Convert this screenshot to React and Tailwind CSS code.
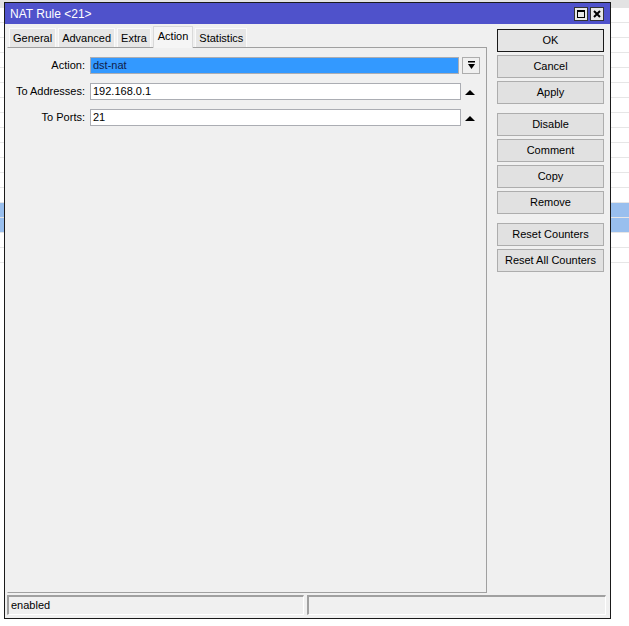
import React from 'react';

const font = { fontFamily: '"Liberation Sans", Arial, sans-serif' };

const tabs = ['General', 'Advanced', 'Extra', 'Action', 'Statistics'];

const buttonGroups = [
  ['OK', 'Cancel', 'Apply'],
  ['Disable', 'Comment', 'Copy', 'Remove'],
  ['Reset Counters', 'Reset All Counters'],
];

// background table rows peeking out behind the dialog
const rows = Array.from({ length: 17 }, (_, i) => i);

const UpArrow = () => (
  <svg width="10" height="6" viewBox="0 0 10 6" className="shrink-0">
    <path d="M0 6 L5 1 L10 6 Z" fill="#000" />
  </svg>
);

const Field = ({ label, value, selected, dropdown }) => (
  <div className="flex items-center h-[17px]">
    <div className="w-[79px] text-right pr-[5px] text-[11px] text-black">{label}</div>
    <div
      className={`h-[17px] border border-[#abadb3] flex items-center px-[2px] text-[11px] ${
        selected ? 'bg-[#3399ff] text-[#10204a] w-[369px]' : 'bg-white text-black w-[371px]'
      }`}
    >
      {value}
    </div>
    {dropdown ? (
      <div className="ml-[3px] w-[18px] h-[17px] border border-[#adadad] bg-[#f0f0f0] flex items-center justify-center">
        <svg width="9" height="9" viewBox="0 0 9 9">
          <rect x="1" y="0" width="7" height="1.5" fill="#000" />
          <path d="M1 3 L8 3 L4.5 8 Z" fill="#000" />
        </svg>
      </div>
    ) : (
      <div className="ml-[4px] w-[10px] flex items-center justify-center">
        <UpArrow />
      </div>
    )}
  </div>
);

const Btn = ({ label, primary }) => (
  <div
    className={`h-[23px] flex items-center justify-center text-[11px] text-black bg-[#e1e1e1] ${
      primary ? 'border border-[#1a1a1a] bg-[#e5e5e5]' : 'border border-[#adadad]'
    }`}
  >
    {label}
  </div>
);

export default function App() {
  return (
    <div className="relative w-[629px] h-[626px] bg-white overflow-hidden" style={font}>
      {/* background list */}
      <div className="flex flex-col">
        <div className="h-[8px] bg-[#e3e3e3]" />
        {rows.map((i) => (
          <div
            key={i}
            className={`h-[15px] border-b border-[#e6e6e6] ${i === 13 || i === 14 ? 'bg-[#99bfee]' : 'bg-white'}`}
          />
        ))}
      </div>

      {/* dialog window */}
      <div className="absolute left-[4px] top-[2px] w-[607px] h-[617px] border border-[#1a1a1a] bg-[#f0f0f0] flex flex-col">
        <div className="h-[21px] bg-[#4f52cb] flex items-center justify-between pl-[5px] pr-[6px]">
          <span className="text-[12px] text-white">NAT Rule &lt;21&gt;</span>
          <div className="flex gap-[2px]">
            <div className="w-[14px] h-[14px] bg-[#e8e8e8] border border-[#333] flex items-center justify-center">
              <div className="w-[8px] h-[8px] border border-black border-t-2" />
            </div>
            <div className="w-[14px] h-[14px] bg-[#e8e8e8] border border-[#333] flex items-center justify-center">
              <svg width="8" height="8" viewBox="0 0 8 8">
                <path d="M1 1 L7 7 M7 1 L1 7" stroke="#000" strokeWidth="2" />
              </svg>
            </div>
          </div>
        </div>

        <div className="flex flex-1 pl-[2px] pr-[6px]">
          {/* left: tabs + panel */}
          <div className="w-[480px] flex flex-col">
            <div className="flex items-end h-[23px] pl-[2px] gap-[2px]">
              {tabs.map((t) =>
                t === 'Action' ? (
                  <div
                    key={t}
                    className="h-[22px] px-[4px] flex items-center bg-[#f5f5f5] border border-b-0 border-[#d9d9d9] text-[11px] text-black -mb-px z-10 pb-[3px]"
                  >
                    {t}
                  </div>
                ) : (
                  <div
                    key={t}
                    className="h-[19px] px-[3px] flex items-center bg-[#e6e6e6] border border-b-0 border-[#fafafa] text-[11px] text-black"
                  >
                    {t}
                  </div>
                )
              )}
            </div>
            <div className="flex-1 border border-[#a0a0a0] border-l-[#f0f0f0] bg-[#f0f0f0] flex flex-col gap-[9px] pt-[9px] pl-[3px]">
              <Field label="Action:" value="dst-nat" selected dropdown />
              <Field label="To Addresses:" value="192.168.0.1" />
              <Field label="To Ports:" value="21" />
            </div>
          </div>

          {/* right: buttons */}
          <div className="ml-[10px] w-[107px] pt-[5px] flex flex-col gap-[9px]">
            {buttonGroups.map((g, gi) => (
              <div key={gi} className="flex flex-col gap-[3px]">
                {g.map((b) => (
                  <Btn key={b} label={b} primary={b === 'OK'} />
                ))}
              </div>
            ))}
          </div>
        </div>

        {/* status bar */}
        <div className="flex gap-[3px] h-[20px] mt-[2px] mb-[3px] pl-[2px] pr-[4px]">
          <div className="w-[297px] border-t-2 border-l-2 border-[#a0a0a0] border-r border-b border-r-white border-b-white flex items-center pl-[2px] text-[11px] text-black">
            enabled
          </div>
          <div className="flex-1 border-t-2 border-l-2 border-[#a0a0a0] border-r border-b border-r-white border-b-white" />
        </div>
      </div>
    </div>
  );
}
